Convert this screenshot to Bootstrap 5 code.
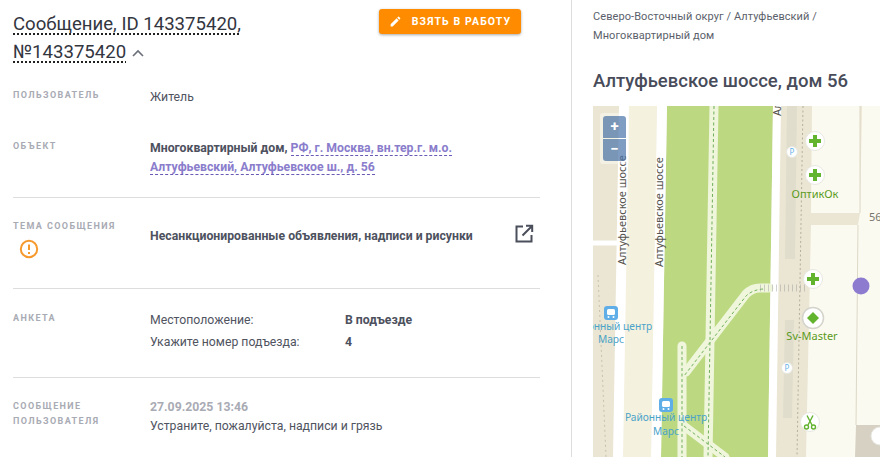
<!doctype html>
<html lang="ru"><head><meta charset="utf-8"><title>Сообщение</title>
<link href="https://cdn.jsdelivr.net/npm/bootstrap@5.3.0/dist/css/bootstrap.min.css" rel="stylesheet">
<style>
html,body{height:457px;overflow:hidden}
body{font-family:Roboto,"Liberation Sans",sans-serif;font-size:12.25px;color:#50545f;background:#fff}
.shell{height:457px;width:880px}
.lpane{width:572px;flex:none;border-right:1px solid #ddd;padding:8px 31px 0 13px}
.rpane{flex:1;min-width:0;padding:8px 0 0 21px;display:flex;flex-direction:column}
.ttl{width:340px;font-size:18.6px;line-height:28px;color:#33363f;font-weight:400;margin:0;padding-top:2px}
.ttl span{text-decoration:underline dotted #222 1.5px;text-underline-offset:3px}
.chev{margin-left:6px;vertical-align:1px}
.takebtn{height:25px;width:142px;margin-top:1px;margin-right:19px;background:#ff8c00;color:#fff;border:0;border-radius:3px;font-size:10.5px;font-weight:700;letter-spacing:1.1px;box-shadow:0 1px 3px rgba(0,0,0,.35);padding:0;gap:10px}
.blk{display:flex;border-bottom:1px solid #ddd}
.blk.last{border-bottom:0}
.lbl{width:137px;flex:none;font-size:9px;font-weight:700;letter-spacing:1.4px;line-height:15px;color:#a9abb4;text-transform:uppercase}
.lbl-drop{margin-top:1px}
.strong{font-weight:700;color:#4d515e}
.addr{color:#8a7dcc;font-weight:700;border-bottom:1px dashed #6a59b5}
.q1{width:195px;flex:none}
.qrow{line-height:22px}
.muted{color:#a9abb4;font-weight:700}
.crumbs{font-size:11px;line-height:18.5px;color:#5b5f6b;letter-spacing:.08px;width:260px}
.addrhead{font-size:18.5px;font-weight:500;color:#484c5a;line-height:24px;margin:24px 0 13px}
.mapbox{flex:1;min-height:0;overflow:hidden;position:relative}
.mapbox svg{display:block}
.zoomctl{position:absolute;left:7px;top:7px;background:rgba(255,255,255,.4);border-radius:3px;padding:3px;display:flex;flex-direction:column;gap:1px}
.zoomctl div{width:23px;height:22px;background:rgba(0,60,136,.5);color:#fff;font-weight:700;font-size:15px;line-height:21px;text-align:center}
.zoomctl div:first-child{border-radius:3px 3px 0 0}
.zoomctl div:last-child{border-radius:0 0 3px 3px}
</style></head><body>
<div class="shell d-flex">
<div class="lpane">
  <div class="d-flex justify-content-between align-items-start" style="height:63px">
    <h1 class="ttl"><span>Сообщение, ID 143375420, №143375420</span><svg class="chev" width="12" height="8" viewBox="0 0 12 8"><path d="M1 7l5-5 5 5" fill="none" stroke="#6b6f7a" stroke-width="1.6"/></svg></h1>
    <button class="takebtn d-flex align-items-center justify-content-center" type="button"><svg width="13" height="13" viewBox="0 0 24 24"><path fill="#fff" d="M3 17.25V21h3.75L17.8 9.94l-3.75-3.75L3 17.25zM20.7 7.04a1 1 0 0 0 0-1.41l-2.34-2.34a1 1 0 0 0-1.41 0l-1.83 1.83 3.75 3.75 1.83-1.83z"/></svg><span>ВЗЯТЬ В РАБОТУ</span></button>
  </div>
  <div class="blk last" style="height:52px;padding-top:17px"><div class="lbl">Пользователь</div><div style="line-height:19px">Житель</div></div>
  <div class="blk" style="height:75px;padding-top:16px"><div class="lbl">Объект</div><div style="width:325px;line-height:19px"><span class="strong">Многоквартирный дом,</span> <span class="addr">РФ, г. Москва, вн.тер.г. м.о. Алтуфьевский, Алтуфьевское ш., д. 56</span></div></div>
  <div class="blk" style="height:91px;padding-top:21px"><div class="lbl"><div>Тема сообщения</div><svg class="d-block" style="margin:5px 0 0 6px" width="20" height="20" viewBox="0 0 20 20"><circle cx="10" cy="10" r="8.2" fill="none" stroke="#f79a2e" stroke-width="2"/><path d="M10 5.5v5.5M10 13v2" stroke="#f79a2e" stroke-width="2"/></svg></div>
    <div class="strong flex-grow-1" style="line-height:19px;margin-top:8px">Несанкционированные объявления, надписи и рисунки</div>
    <svg style="margin:5px 6px 0 0" width="20" height="20" viewBox="0 0 20 20"><path d="M9 2.5H2.5v15h15V11M12 1.8h6.2V8M18 2L8.5 11.5" fill="none" stroke="#4b4f5c" stroke-width="2"/></svg></div>
  <div class="blk" style="height:89px;padding-top:20px"><div class="lbl" style="margin-top:2px">Анкета</div><div><div class="d-flex qrow"><div class="q1">Местоположение:</div><div class="strong">В подъезде</div></div><div class="d-flex qrow" style="margin-top:-.5px"><div class="q1">Укажите номер подъезда:</div><div class="strong">4</div></div></div></div>
  <div class="blk last" style="padding-top:20px"><div class="lbl lbl-drop">Сообщение пользователя</div><div style="line-height:19px"><div class="muted">27.09.2025 13:46</div><div>Устраните, пожалуйста, надписи и грязь</div></div></div>
</div>
<div class="rpane">
  <div class="crumbs">Северо-Восточный округ / Алтуфьевский / Многоквартирный дом</div>
  <div class="addrhead">Алтуфьевское шоссе, дом 56</div>
  <div class="mapbox">
    <svg width="287" height="351" viewBox="593 106 287 351" font-family="'Noto Sans','Open Sans',sans-serif">
      <rect x="593" y="106" width="287" height="351" fill="#ebe6d3"/>
      <polygon points="629,106 657,106 651,457 622,457" fill="#f5f1df"/>
      <polygon points="667,106 773,106 768,457 661,457" fill="#bcd982"/>
      <path d="M624 106L618 457" stroke="#fff" stroke-width="10"/>
      <path d="M662 106L656 457" stroke="#fff" stroke-width="10"/>
      <path d="M777 106L772 457" stroke="#fff" stroke-width="8"/>
      <path d="M593 243H618" stroke="#fff" stroke-width="5"/>
      <polygon points="787,106 797,106 795,259 785,259" fill="#e0ddcd"/>
      <polygon points="785,320 794,320 792,418 783,418" fill="#e0ddcd"/>
      <polygon points="812,106 860,106 860,213 811,213" fill="#fbfaf1"/>
      <polygon points="811,225 858,225 856,457 806,457" fill="#fbfaf1"/>
      <polygon points="862,106 880,106 880,425 856,425 858,225 860,213" fill="#fbfaf1"/>
      <polygon points="856,425 880,425 880,457 855,457" fill="#d6d1c3"/>
      <path d="M858 225L856 425M860 106V213" stroke="#dcd8c6" stroke-width="1"/>
      <g fill="none" stroke="#eff6dc" stroke-linecap="round" stroke-linejoin="round" stroke-width="9">
        <path d="M714 106L708 457"/>
        <path d="M769 288H760Q752 288 746 294L686 372"/>
        <path d="M682 346V457"/>
        <path d="M684 426L725 457"/>
      </g>
      <g fill="none" stroke="#6fb05a" stroke-dasharray="3 2.5" stroke-width="1">
        <path d="M714 106L708 457"/><path d="M763 289Q752 290 746 296L684 376"/><path d="M682 346V457"/><path d="M684 426L725 457"/>
      </g>
      <path d="M760 288h48" stroke="#999" stroke-width="7" stroke-dasharray="1 3" opacity=".45"/>
      <path d="M803 106L797 457" stroke="#b5ae9c" stroke-dasharray="2 2.5" fill="none"/>
      <path d="M598 275L606 457" stroke="#c8c2ad" stroke-dasharray="2 3" fill="none"/>
      <circle cx="861" cy="286" r="8.5" fill="#8d7bd0"/>
      <g font-size="11" fill="#55534c">
        <text transform="translate(626,265) rotate(-90)">Алтуфьевское шоссе</text>
        <text transform="translate(663,267) rotate(-90)">Алтуфьевское шоссе</text>
        <text transform="translate(781,116) rotate(-90)">Ал</text>
        <text x="869" y="221" fill="#77756c">56</text>
      </g>
      <g font-size="10.2" fill="#4aa3c9" text-anchor="middle"><text x="611" y="330">Районный центр</text><text x="611" y="343">Марс</text><text x="666" y="421">Районный центр</text><text x="666" y="435">Марс</text></g>
      <g fill="#5faee8"><rect x="604" y="306" width="14" height="14" rx="3"/><rect x="659" y="398" width="14" height="14" rx="3"/></g>
      <g fill="#fff"><rect x="607" y="309" width="8" height="6" rx="1.5"/><rect x="662" y="401" width="8" height="6" rx="1.5"/><circle cx="608.5" cy="317" r="1"/><circle cx="613.5" cy="317" r="1"/><circle cx="663.5" cy="409" r="1"/><circle cx="668.5" cy="409" r="1"/></g>
      <g fill="#fff" stroke="#e8e8e2"><circle cx="815" cy="141" r="9.5"/><circle cx="815" cy="175" r="9.5"/><circle cx="813" cy="279" r="9.5"/><circle cx="813" cy="318" r="10.5" stroke="#d4d4cc" stroke-width="1.5"/><circle cx="810" cy="422" r="9.5"/><circle cx="792" cy="152" r="5.5"/><circle cx="787" cy="368" r="5.5"/><circle cx="880" cy="436" r="9"/></g>
      <g fill="#62b32e"><path d="M813 135h4v4h4v4h-4v4h-4v-4h-4v-4h4zM813 169h4v4h4v4h-4v4h-4v-4h-4v-4h4zM811 273h4v4h4v4h-4v4h-4v-4h-4v-4h4z"/><path d="M813 312l6 6-6 6-6-6z"/></g>
      <g fill="none" stroke="#62b32e" stroke-width="1.4"><path d="M807 415.5l5 9.5M813 415.5l-5 9.5"/><circle cx="806.5" cy="427" r="2"/><circle cx="813.5" cy="427" r="2"/></g>
      <g font-size="11" fill="#5b9a22" text-anchor="middle"><text x="815" y="198">ОптикОк</text><text x="812" y="340">Sv-Master</text></g>
      <g font-size="8" fill="#68b2e8" text-anchor="middle"><text x="792" y="155">P</text><text x="787" y="371">P</text></g>
    </svg>
    <div class="zoomctl"><div>+</div><div>−</div></div>
  </div>
</div>
</div>
<script src="https://cdn.jsdelivr.net/npm/bootstrap@5.3.0/dist/js/bootstrap.bundle.min.js"></script>
</body></html>
